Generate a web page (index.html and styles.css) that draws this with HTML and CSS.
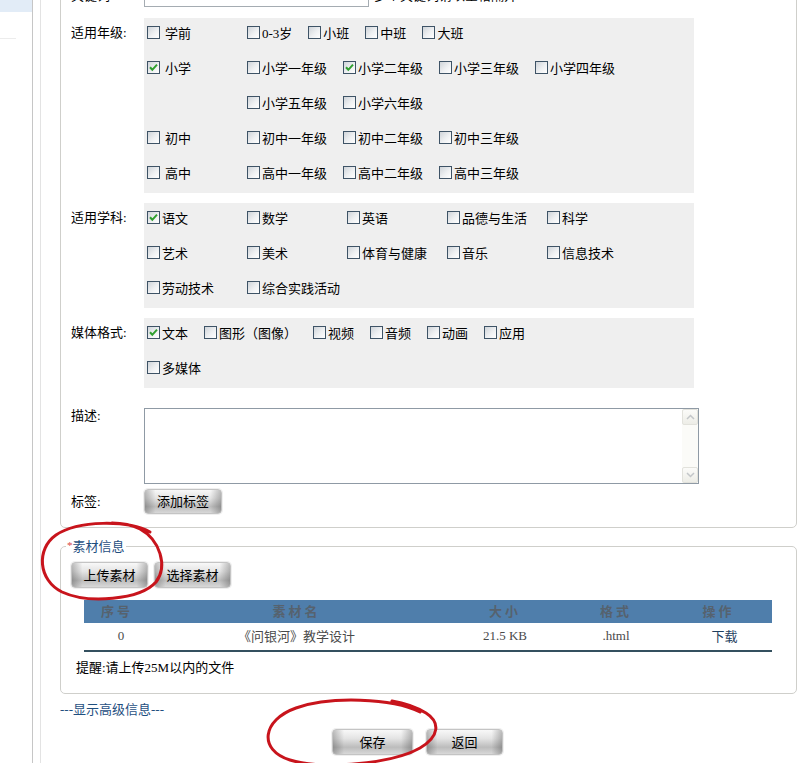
FILE: index.html
```html
<!DOCTYPE html>
<html lang="zh-CN">
<head>
<meta charset="utf-8">
<title>素材</title>
<link rel="stylesheet" href="styles.css">
</head>
<body>
<div class="page">
  <div class="sidebar"><div class="sb-top"></div><div class="sb-line"></div></div>
  <div class="strip"></div>
  <div class="main">
    <fieldset class="box f1">
      <div class="row kw">
        <div class="label kw-label">关键词:</div>
        <input class="kw-input" type="text">
        <span class="hint">多个关键词请以空格隔开</span>
      </div>

      <div class="row r-grade">
        <div class="label">适用年级:</div>
        <div class="panel">
          <div class="prow">
            <div class="lead"><span class="cb"></span>学前</div>
            <div class="items">
              <span class="opt"><span class="cb"></span>0-3岁</span>
              <span class="opt"><span class="cb"></span>小班</span>
              <span class="opt"><span class="cb"></span>中班</span>
              <span class="opt"><span class="cb"></span>大班</span>
            </div>
          </div>
          <div class="prow">
            <div class="lead"><span class="cb on"><svg viewBox="0 0 11 11" width="11" height="11"><path d="M2 5.3 L4.3 7.8 L9 2.6"/></svg></span>小学</div>
            <div class="items">
              <span class="opt"><span class="cb"></span>小学一年级</span>
              <span class="opt"><span class="cb on"><svg viewBox="0 0 11 11" width="11" height="11"><path d="M2 5.3 L4.3 7.8 L9 2.6"/></svg></span>小学二年级</span>
              <span class="opt"><span class="cb"></span>小学三年级</span>
              <span class="opt"><span class="cb"></span>小学四年级</span>
            </div>
          </div>
          <div class="prow">
            <div class="lead"></div>
            <div class="items">
              <span class="opt"><span class="cb"></span>小学五年级</span>
              <span class="opt"><span class="cb"></span>小学六年级</span>
            </div>
          </div>
          <div class="prow">
            <div class="lead"><span class="cb"></span>初中</div>
            <div class="items">
              <span class="opt"><span class="cb"></span>初中一年级</span>
              <span class="opt"><span class="cb"></span>初中二年级</span>
              <span class="opt"><span class="cb"></span>初中三年级</span>
            </div>
          </div>
          <div class="prow">
            <div class="lead"><span class="cb"></span>高中</div>
            <div class="items">
              <span class="opt"><span class="cb"></span>高中一年级</span>
              <span class="opt"><span class="cb"></span>高中二年级</span>
              <span class="opt"><span class="cb"></span>高中三年级</span>
            </div>
          </div>
        </div>
      </div>

      <div class="row r-subj">
        <div class="label">适用学科:</div>
        <div class="panel grid5">
          <span class="cell"><span class="cb on"><svg viewBox="0 0 11 11" width="11" height="11"><path d="M2 5.3 L4.3 7.8 L9 2.6"/></svg></span>语文</span>
          <span class="cell"><span class="cb"></span>数学</span>
          <span class="cell"><span class="cb"></span>英语</span>
          <span class="cell"><span class="cb"></span>品德与生活</span>
          <span class="cell"><span class="cb"></span>科学</span>
          <span class="cell"><span class="cb"></span>艺术</span>
          <span class="cell"><span class="cb"></span>美术</span>
          <span class="cell"><span class="cb"></span>体育与健康</span>
          <span class="cell"><span class="cb"></span>音乐</span>
          <span class="cell"><span class="cb"></span>信息技术</span>
          <span class="cell"><span class="cb"></span>劳动技术</span>
          <span class="cell"><span class="cb"></span>综合实践活动</span>
        </div>
      </div>

      <div class="row r-media">
        <div class="label">媒体格式:</div>
        <div class="panel">
          <div class="prow items">
            <span class="opt"><span class="cb on"><svg viewBox="0 0 11 11" width="11" height="11"><path d="M2 5.3 L4.3 7.8 L9 2.6"/></svg></span>文本</span>
            <span class="opt"><span class="cb"></span>图形（图像）</span>
            <span class="opt"><span class="cb"></span>视频</span>
            <span class="opt"><span class="cb"></span>音频</span>
            <span class="opt"><span class="cb"></span>动画</span>
            <span class="opt"><span class="cb"></span>应用</span>
          </div>
          <div class="prow items">
            <span class="opt"><span class="cb"></span>多媒体</span>
          </div>
        </div>
      </div>

      <div class="row r-desc">
        <div class="label desc-label">描述:</div>
        <div class="ta">
          <textarea></textarea>
          <div class="sbar">
            <span class="sbtn"><svg viewBox="0 0 9 6" width="9" height="6"><path d="M1 5 L4.5 1.5 L8 5"/></svg></span>
            <span class="sbtn"><svg viewBox="0 0 9 6" width="9" height="6"><path d="M1 1 L4.5 4.5 L8 1"/></svg></span>
          </div>
        </div>
      </div>

      <div class="row r-tag">
        <div class="label tag-label">标签:</div>
        <button class="btn btn-tag" type="button">添加标签</button>
      </div>
    </fieldset>

    <fieldset class="box f2">
      <legend><span class="req">*</span>素材信息</legend>
      <div class="btn-row">
        <button class="btn btn-77" type="button">上传素材</button>
        <button class="btn btn-77" type="button">选择素材</button>
      </div>
      <table class="files">
        <colgroup><col class="c1"><col class="c2"><col class="c3"><col class="c4"><col class="c5"></colgroup>
        <thead>
          <tr><th>序号</th><th>素材名</th><th>大小</th><th>格式</th><th>操作</th></tr>
        </thead>
        <tbody>
          <tr><td class="num">0</td><td>《问银河》教学设计</td><td>21.5 KB</td><td>.html</td><td class="op"><a class="dl">下载</a></td></tr>
        </tbody>
      </table>
      <p class="tip">提醒:请上传25M以内的文件</p>
    </fieldset>

    <div class="adv">---显示高级信息---</div>
    <div class="actions">
      <button class="btn btn-save" type="button">保存</button>
      <button class="btn btn-77" type="button">返回</button>
    </div>
  </div>

  <svg class="marks" width="804" height="763" viewBox="0 0 804 763">
    <path d="M150 532 C128 520 78 520 56 535 C36 549 38 580 62 592 C88 604 140 600 156 582 C168 566 160 540 140 529 C132 525 122 523 112 523"/>
    <path d="M420 712 C392 698 330 696 296 708 C262 720 258 750 290 760 C322 770 392 764 420 748 C440 736 440 722 426 713 C416 707 404 703 392 701"/>
  </svg>
</div>
</body>
</html>
```

FILE: styles.css
```css
* { box-sizing: border-box; }

html, body {
  margin: 0;
  padding: 0;
  background: #fff;
}

body {
  font-family: "Liberation Serif", "Noto Sans CJK SC", serif;
  font-size: 13px;
  color: #000;
  overflow: hidden;
}

.page {
  position: relative;
  display: flex;
  width: 804px;
  height: 763px;
  overflow: hidden;
}

.sidebar {
  flex: none;
  width: 33px;
  border-right: 1px solid #c6c6c6;
}

.sb-top {
  height: 12px;
  background: #e2ecf7;
}

.sb-line {
  margin-top: 26px;
  width: 16px;
  height: 1px;
  background: #ececec;
}

.strip {
  flex: none;
  width: 8px;
  border-right: 1px solid #e3e3e3;
}

.main {
  flex: none;
  width: 763px;
  padding-left: 19px;
}

.box {
  width: 737px;
  min-width: 0;
  border: 1px solid #cfcfcb;
  border-radius: 5px;
}

.f1 {
  margin: -30px 0 0;
  padding: 14px 0 13px 10px;
}

.row {
  display: flex;
  align-items: flex-start;
}

.label {
  flex: none;
  width: 73px;
  line-height: 29px;
  white-space: nowrap;
}

.kw {
  height: 22px;
  align-items: center;
}

.kw-label {
  line-height: 22px;
}

.kw-input {
  width: 225px;
  height: 22px;
  margin: 0;
  border: 1px solid #a5acb2;
  padding: 0 2px;
}

.hint {
  margin-left: 5px;
  line-height: 22px;
}

.r-grade { margin-top: 11px; }
.r-subj { margin-top: 10px; }
.r-media { margin-top: 10px; }
.r-desc { margin-top: 20px; }
.r-tag { margin-top: 5px; }

.panel {
  width: 550px;
  background: #efefef;
}

.prow {
  display: flex;
  align-items: center;
  height: 35px;
  padding-bottom: 6px;
}

.lead {
  flex: none;
  display: flex;
  align-items: center;
  width: 100px;
  padding-left: 3px;
}

.lead .cb {
  margin-right: 5px;
}

.items {
  display: flex;
  align-items: center;
  padding-left: 3px;
}

.opt {
  display: inline-flex;
  align-items: center;
  margin-right: 16px;
  white-space: nowrap;
}

.grid5 {
  display: grid;
  grid-template-columns: repeat(5, 100px);
  grid-auto-rows: 35px;
}

.cell {
  display: flex;
  align-items: center;
  padding: 0 0 6px 3px;
  white-space: nowrap;
}

.cb {
  flex: none;
  display: inline-flex;
  align-items: center;
  justify-content: center;
  width: 13px;
  height: 13px;
  margin-right: 2px;
  border: 1px solid #3e5366;
  background: linear-gradient(135deg, #cfd4d9 0%, #eef0f2 55%, #ffffff 100%);
}

.cb svg path {
  fill: none;
  stroke: #2f9f2f;
  stroke-width: 2;
}

.desc-label {
  line-height: 16px;
}

.ta {
  display: flex;
  width: 555px;
  height: 76px;
  border: 1px solid #8f9aa5;
  background: #fff;
}

.ta textarea {
  flex: 1;
  margin: 0;
  padding: 2px;
  border: 0;
  outline: none;
  resize: none;
  background: #fff;
}

.sbar {
  flex: none;
  display: flex;
  flex-direction: column;
  justify-content: space-between;
  width: 16px;
  background: #fbfbf8;
}

.sbtn {
  display: flex;
  align-items: center;
  justify-content: center;
  height: 16px;
  border: 1px solid #e2e2dc;
  border-radius: 2px;
  background: linear-gradient(#fbfbf9, #ededE7);
}

.sbtn svg path {
  fill: none;
  stroke: #c3c6c9;
  stroke-width: 1.5;
}

.tag-label {
  margin-top: 3px;
  line-height: 20px;
}

.btn {
  height: 26px;
  margin: 0;
  padding: 0 0 2px;
  border: 1px solid #c4c4c4;
  border-radius: 4px;
  font-family: "Liberation Serif", "Noto Sans CJK SC", serif;
  font-size: 13px;
  color: #000;
  background:
    linear-gradient(to right, rgba(0,0,0,.24) 0%, rgba(0,0,0,0) 14%, rgba(0,0,0,0) 86%, rgba(0,0,0,.24) 100%),
    linear-gradient(to bottom, #f8f8f8 0%, #e4e4e4 35%, #bcbcbc 72%, #d8d8d8 100%);
  box-shadow: 0 0 0 1px #efefef;
}

.btn-tag {
  width: 78px;
  height: 25px;
}

.btn-77 { width: 77px; }
.btn-save { width: 81px; }

.f2 {
  margin: 9px 0 0;
  padding: 0 0 16px 10px;
}

.f2 legend {
  margin-left: -5px;
  padding: 0 1px;
  line-height: 16px;
  color: #1f4f7f;
}

.req {
  color: #d84444;
  font-size: 11px;
  vertical-align: 2px;
}

.btn-row {
  display: flex;
  gap: 6px;
  margin-top: 7px;
}

.files {
  width: 688px;
  margin: 12px 0 0 13px;
  border-collapse: collapse;
  table-layout: fixed;
}

.c1 { width: 66px; }
.c2 { width: 293px; }
.c3 { width: 124px; }
.c4 { width: 98px; }
.c5 { width: 107px; }

.files th {
  height: 23px;
  padding: 0 0 2px;
  background: #4f7eab;
  color: #56626e;
  font-weight: bold;
  letter-spacing: 3px;
  text-align: center;
}

.files td {
  height: 28px;
  padding: 0 0 2px;
  border-bottom: 2px solid #34505f;
  color: #4a4a4a;
  text-align: center;
}

.files td.num { padding-left: 8px; }
.files td.op { padding-left: 12px; }

.dl {
  color: #1f3f5f;
}

.tip {
  margin: 7px 0 0 5px;
  line-height: 18px;
}

.adv {
  margin-top: 8px;
  line-height: 16px;
  color: #1f4f7f;
}

.actions {
  display: flex;
  gap: 13px;
  margin-top: 11px;
  padding-left: 272px;
}

.marks {
  position: absolute;
  top: 0;
  left: 0;
  pointer-events: none;
}

.marks path {
  fill: none;
  stroke: #c8141c;
  stroke-width: 3;
  stroke-linecap: round;
}
```
